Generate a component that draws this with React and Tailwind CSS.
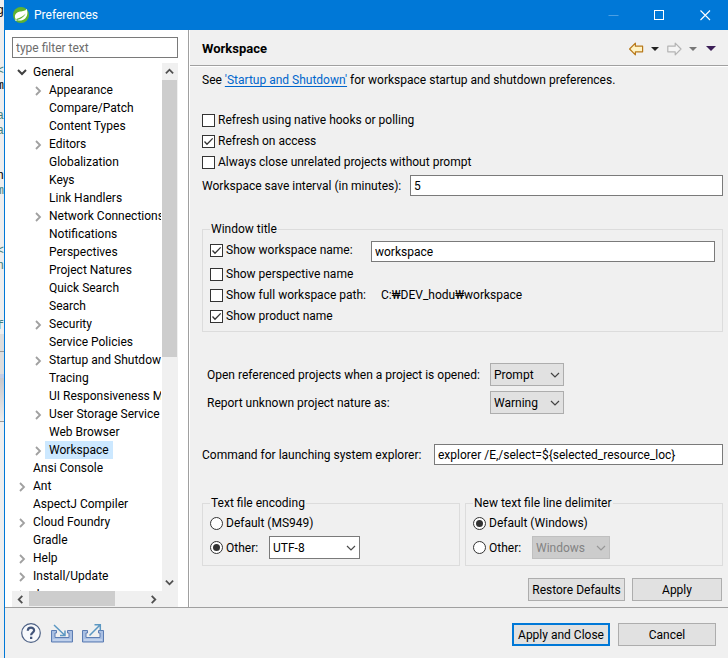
import { useState } from "react";

const TREE = [
	{ label: "General", level: 0, state: "open" },
	{ label: "Appearance", level: 1, state: "closed" },
	{ label: "Compare/Patch", level: 1 },
	{ label: "Content Types", level: 1 },
	{ label: "Editors", level: 1, state: "closed" },
	{ label: "Globalization", level: 1 },
	{ label: "Keys", level: 1 },
	{ label: "Link Handlers", level: 1 },
	{ label: "Network Connections", level: 1, state: "closed" },
	{ label: "Notifications", level: 1 },
	{ label: "Perspectives", level: 1 },
	{ label: "Project Natures", level: 1 },
	{ label: "Quick Search", level: 1 },
	{ label: "Search", level: 1 },
	{ label: "Security", level: 1, state: "closed" },
	{ label: "Service Policies", level: 1 },
	{ label: "Startup and Shutdown", level: 1, state: "closed" },
	{ label: "Tracing", level: 1 },
	{ label: "UI Responsiveness Monitoring", level: 1 },
	{ label: "User Storage Service", level: 1, state: "closed" },
	{ label: "Web Browser", level: 1 },
	{ label: "Workspace", level: 1, state: "closed" },
	{ label: "Ansi Console", level: 0 },
	{ label: "Ant", level: 0, state: "closed" },
	{ label: "AspectJ Compiler", level: 0 },
	{ label: "Cloud Foundry", level: 0, state: "closed" },
	{ label: "Gradle", level: 0 },
	{ label: "Help", level: 0, state: "closed" },
	{ label: "Install/Update", level: 0, state: "closed" },
	{ label: "Java", level: 0, state: "closed" },
];

// Editor lines that show past the left edge of the dialog
const EDITOR_LINES = [
	"g", "", "", "", "<", "m", "", "a", "a", "", "", "n", "m", "", "", "", "<", "n", "", "", "", "f",
];
const DARK_LINES = [0, 5, 11];

const CHEVRONS = {
	up: "M1 7 L5 3 L9 7",
	down: "M1 3 L5 7 L9 3",
	left: "M7 1 L3 5 L7 9",
	right: "M3 1 L7 5 L3 9",
};

const Chevron = ({ dir, className, width = 2 }) => (
	<svg viewBox="0 0 10 10" className={className} fill="none" stroke="currentColor" strokeWidth={width}>
		<path d={CHEVRONS[dir]} />
	</svg>
);

const CheckBox = ({ label, defaultChecked }) => (
	<label className="flex items-center gap-[3px] whitespace-nowrap">
		<span className="grid size-[13px] shrink-0">
			<input
				type="checkbox"
				defaultChecked={defaultChecked}
				className="peer col-start-1 row-start-1 size-[13px] appearance-none border border-[#333] bg-white"
			/>
			<svg
				viewBox="0 0 13 13"
				className="pointer-events-none invisible col-start-1 row-start-1 size-[13px] peer-checked:visible"
				fill="none"
				stroke="#333"
				strokeWidth="1.3">
				<path d="M2.5 6.5 L5 9.2 L10.7 3.4" />
			</svg>
		</span>
		{label}
	</label>
);

const Radio = ({ label, name, defaultChecked }) => (
	<label className="flex items-center gap-[3px] whitespace-nowrap">
		<span className="grid size-[13px] shrink-0 place-items-center">
			<input
				type="radio"
				name={name}
				defaultChecked={defaultChecked}
				className="peer col-start-1 row-start-1 size-[13px] appearance-none rounded-full border border-[#333] bg-white"
			/>
			<span className="pointer-events-none invisible col-start-1 row-start-1 size-[7px] rounded-full bg-[#333] peer-checked:visible" />
		</span>
		{label}
	</label>
);

const Select = ({ id, label, options, disabled, className }) => (
	<span className={`grid h-[23px] shrink-0 items-center ${className}`}>
		<select
			id={id}
			aria-label={label}
			disabled={disabled}
			className="col-start-1 row-start-1 h-full w-full appearance-none border border-inherit pl-[3px]">
			{options.map((option) => (
				<option key={option}>{option}</option>
			))}
		</select>
		<Chevron
			dir="down"
			width={1.2}
			className="pointer-events-none col-start-1 row-start-1 mr-1 size-[10px] justify-self-end opacity-70"
		/>
	</span>
);

const INPUT = "h-[21px] min-w-0 border border-[#7a7a7a] bg-white px-[3px]";
const BUTTON = "h-[23px] whitespace-nowrap border border-[#adadad] bg-[#e1e1e1]";

const TitleBar = () => (
	<header className="flex h-[30px] shrink-0 items-center bg-[#0078d7] text-white">
		<svg viewBox="0 0 16 16" className="ml-2 size-4">
			<circle cx="8" cy="8" r="8" fill="#5fb331" />
			<path d="M13.6 1.8 C12.6 4.2 10 4.1 7 4.6 C3.6 5.2 1.7 7.3 1.9 9.8 C2 11.5 3 12.7 4.4 13.3 C8.9 14.5 12.7 12 14 8.4 C14.7 6.2 14.5 3.8 13.6 1.8 Z" fill="#fff" />
			<path d="M2.3 13.5 C7 12.8 10.6 10.8 12.7 6.6 C10.5 9.3 7.4 10.9 3.2 12" fill="#5fb331" />
			<circle cx="3" cy="13.1" r="0.8" fill="#fff" />
		</svg>
		<h1 className="ml-[5px] flex-1">Preferences</h1>
		<button aria-label="Minimize" className="flex w-[46px] justify-center">
			<svg viewBox="0 0 11 11" className="size-[11px]" stroke="#4b9fe3">
				<path d="M0.5 5.5 H10.5" />
			</svg>
		</button>
		<button aria-label="Maximize" className="flex w-[46px] justify-center">
			<svg viewBox="0 0 11 11" className="size-[11px]" fill="none" stroke="#fff">
				<rect x="0.5" y="0.5" width="9" height="9" />
			</svg>
		</button>
		<button aria-label="Close" className="flex w-[46px] justify-center">
			<svg viewBox="0 0 11 11" className="size-[11px]" stroke="#fff" strokeWidth="1.1">
				<path d="M0.5 0.5 L10 10 M10 0.5 L0.5 10" />
			</svg>
		</button>
	</header>
);

const TreeItem = ({ item, selected, onSelect }) => (
	<li className={`flex h-[18px] items-center ${item.level ? "pl-[21px]" : "pl-[5px]"}`}>
		<span className="flex w-3 shrink-0">
			{item.state === "open" && <Chevron dir="down" className="size-[10px] text-[#404040]" />}
			{item.state === "closed" && <Chevron dir="right" width={1.8} className="mt-[2px] size-[10px] text-[#a0a0a0]" />}
		</span>
		<button
			onClick={() => onSelect(item.label)}
			className={`h-[18px] whitespace-nowrap px-1 ${selected ? "bg-[#cce8ff]" : ""}`}>
			{item.label}
		</button>
	</li>
);

const Sidebar = () => {
	const [selected, setSelected] = useState("Workspace");

	return (
		<aside className="flex w-[185px] shrink-0 flex-col border-r border-white bg-white">
			<div className="flex min-h-0 flex-1 flex-col border-r border-[#a0a0a0] pl-[7px] pr-[10px] pt-[7px]">
				<input
					type="text"
					aria-label="Filter"
					placeholder="type filter text"
					className={`${INPUT} shrink-0 placeholder:text-[#6d6d6d]`}
				/>
				<div className="mt-[5px] flex min-h-0 flex-1 gap-px">
					<ul className="min-w-0 flex-1 overflow-hidden">
						{TREE.map((item) => (
							<TreeItem
								key={item.label}
								item={item}
								selected={item.label === selected}
								onSelect={setSelected}
							/>
						))}
					</ul>
					<div className="flex w-4 shrink-0 flex-col bg-[#f0f0f0]">
						<button aria-label="Scroll up" className="flex h-[17px] items-center justify-center pr-px text-[#505050]">
							<Chevron dir="up" className="size-[9px]" />
						</button>
						<div className="flex-1">
							<div className="mr-px h-[56%] bg-[#cdcdcd]" />
						</div>
						<button aria-label="Scroll down" className="flex h-[17px] items-center justify-center pr-px text-[#505050]">
							<Chevron dir="down" className="size-[9px]" />
						</button>
					</div>
				</div>
				<div className="flex h-4 shrink-0 bg-[#f0f0f0] pr-4">
					<button aria-label="Scroll left" className="flex w-[17px] items-center justify-center text-[#505050]">
						<Chevron dir="left" className="size-[9px]" />
					</button>
					<div className="flex-1">
						<div className="h-[15px] w-[74%] bg-[#cdcdcd]" />
					</div>
					<button aria-label="Scroll right" className="flex w-[17px] items-center justify-center text-[#505050]">
						<Chevron dir="right" className="size-[9px]" />
					</button>
				</div>
			</div>
		</aside>
	);
};

const Triangle = ({ fill }) => (
	<svg viewBox="0 0 8 4" className="h-1 w-2">
		<path d="M0 0 H8 L4 4 Z" fill={fill} />
	</svg>
);

const PageHeader = () => (
	<div className="flex h-9 shrink-0 items-center border-b border-[#a0a0a0] px-3 pt-[2px]">
		<h2 className="flex-1 text-[13px] font-bold">Workspace</h2>
		<div className="flex items-center">
			<button aria-label="Back">
				<svg viewBox="0 0 16 14" className="h-[14px] w-4" fill="#fff3c4" stroke="#b8791b" strokeWidth="1.2" strokeLinejoin="round">
					<path d="M0.6 7 L6.4 1.2 V4.2 H13.6 V9.8 H6.4 V12.8 Z" />
				</svg>
			</button>
			<button aria-label="Back history" className="ml-[6px]">
				<Triangle fill="#222" />
			</button>
			<button aria-label="Forward" className="ml-2">
				<svg viewBox="0 0 16 14" className="h-[14px] w-4" fill="#f5f5f5" stroke="#b4b4b4" strokeWidth="1.2" strokeLinejoin="round">
					<path d="M14 7 L8.2 1.2 V4.2 H0.8 V9.8 H8.2 V12.8 Z" />
				</svg>
			</button>
			<button aria-label="Forward history" className="ml-[6px]">
				<Triangle fill="#777" />
			</button>
			<button aria-label="View menu" className="ml-[9px]">
				<svg viewBox="0 0 10 5" className="h-[5px] w-[10px]">
					<path d="M0 0 H10 L5 5 Z" fill="#3c1f57" />
				</svg>
			</button>
		</div>
	</div>
);

const Group = ({ title, className, children }) => (
	<fieldset className={`min-w-0 border border-[#dcdcdc] px-[7px] ${className}`}>
		<legend className="h-4 px-px leading-4">{title}</legend>
		{children}
	</fieldset>
);

const WorkspacePage = () => (
	<div className="flex flex-1 flex-col border-t border-white pl-3 pr-[5px]">
		<p className="mt-[5px] leading-4">
			See{" "}
			<a href="#startup" className="text-[#0066cc] underline underline-offset-2">
				'Startup and Shutdown'
			</a>{" "}
			for workspace startup and shutdown preferences.
		</p>

		<div className="mt-6 flex flex-col gap-[5px] leading-4">
			<CheckBox label="Refresh using native hooks or polling" />
			<CheckBox label="Refresh on access" defaultChecked />
			<CheckBox label="Always close unrelated projects without prompt" />
		</div>
		<div className="mt-[5px] flex items-center gap-2">
			<label htmlFor="interval" className="w-[200px] whitespace-nowrap">
				Workspace save interval (in minutes):
			</label>
			<input id="interval" type="text" defaultValue="5" className={`${INPUT} flex-1`} />
		</div>

		<Group title="Window title" className="mt-[25px] pb-[7px]">
			<div className="mt-1 flex gap-2">
				<div className="w-[153px] leading-[19px]">
					<CheckBox label="Show workspace name:" defaultChecked />
				</div>
				<input type="text" aria-label="Workspace name" defaultValue="workspace" className={`${INPUT} flex-1`} />
			</div>
			<div className="mt-1 flex flex-col gap-[5px] leading-4">
				<CheckBox label="Show perspective name" />
				<div className="flex">
					<div className="w-[171px]">
						<CheckBox label="Show full workspace path:" />
					</div>
					<span>C:₩DEV_hodu₩workspace</span>
				</div>
				<CheckBox label="Show product name" defaultChecked />
			</div>
		</Group>

		<div className="mt-[31px] grid grid-cols-[278px_auto] items-center justify-start gap-x-[5px] gap-y-[5px] pl-[5px]">
			<label htmlFor="referenced" className="whitespace-nowrap">
				Open referenced projects when a project is opened:
			</label>
			<Select id="referenced" options={["Prompt", "Always", "Never"]} className="w-[74px] border-[#adadad] bg-[#e1e1e1]" />
			<label htmlFor="nature" className="whitespace-nowrap">
				Report unknown project nature as:
			</label>
			<Select id="nature" options={["Warning", "Error", "Ignore"]} className="w-[74px] border-[#adadad] bg-[#e1e1e1]" />
		</div>

		<div className="mt-[30px] flex items-center gap-2">
			<label htmlFor="command" className="w-[224px] whitespace-nowrap">
				Command for launching system explorer:
			</label>
			<input
				id="command"
				type="text"
				defaultValue="explorer /E,/select=${selected_resource_loc}"
				className={`${INPUT} flex-1`}
			/>
		</div>

		<div className="mt-[30px] grid grid-cols-2 gap-[5px]">
			<Group title="Text file encoding" className="pb-[6px]">
				<div className="mt-1 leading-4">
					<Radio name="encoding" label="Default (MS949)" />
				</div>
				<div className="mt-[5px] flex items-center">
					<div className="w-[59px]">
						<Radio name="encoding" label="Other:" defaultChecked />
					</div>
					<Select label="Encoding" options={["UTF-8", "UTF-16", "ISO-8859-1"]} className="w-[91px] border-[#7a7a7a] bg-white" />
				</div>
			</Group>
			<Group title="New text file line delimiter" className="pb-[6px]">
				<div className="mt-1 leading-4">
					<Radio name="delimiter" label="Default (Windows)" defaultChecked />
				</div>
				<div className="mt-[5px] flex items-center">
					<div className="w-[59px]">
						<Radio name="delimiter" label="Other:" />
					</div>
					<Select
						label="Line delimiter"
						options={["Windows", "Unix"]}
						disabled
						className="w-[78px] border-[#bfbfbf] bg-[#cccccc] text-[#838383]"
					/>
				</div>
			</Group>
		</div>

		<div className="mt-3 flex justify-end gap-[7px] pr-px">
			<button className={`${BUTTON} w-[97px]`}>Restore Defaults</button>
			<button className={`${BUTTON} w-[90px]`}>Apply</button>
		</div>
	</div>
);

const Tray = ({ children }) => (
	<svg viewBox="0 0 22 20" className="h-5 w-[22px]" fill="none">
		<path
			d="M0.5 7.5 H5.5 V10 H4 V14.5 H18 V10 H16.5 V7.5 H21.5 V19 H0.5 Z"
			fill="#a9bfe2"
			stroke="#5c7db3"
		/>
		<path d="M2 17 H20" stroke="#d7e3f5" />
		{children}
	</svg>
);

const Footer = () => (
	<footer className="flex h-[51px] shrink-0 items-center border-t border-[#a0a0a0] pl-4 pr-3">
		<div className="flex flex-1 items-center gap-[9px]">
			<button aria-label="Help" className="pr-px">
				<svg viewBox="0 0 20 20" className="size-5" fill="none">
					<circle cx="10" cy="10" r="9.3" fill="#f7f9fc" stroke="#4d6185" strokeWidth="1.2" />
					<path d="M6.8 7.8 C6.8 3.6 13.2 3.8 13.1 7.5 C13 9.7 10.1 9.6 10.1 12.2" stroke="#42557b" strokeWidth="2.2" />
					<rect x="9" y="13.7" width="2.3" height="2.3" fill="#42557b" />
				</svg>
			</button>
			<button aria-label="Import preferences">
				<Tray>
					<path d="M3 2 L13.5 12 M14 7.5 V12.5 H9" stroke="#5b97c2" strokeWidth="1.5" />
				</Tray>
			</button>
			<button aria-label="Export preferences">
				<Tray>
					<path d="M7.5 12.5 L18 2 M12.5 1.7 H18.3 V7.5" stroke="#5b97c2" strokeWidth="1.5" />
				</Tray>
			</button>
		</div>
		<div className="flex gap-2 pt-[3px]">
			<button className="h-[23px] w-[98px] whitespace-nowrap border-2 border-[#0078d7] bg-[#e1e1e1]">
				Apply and Close
			</button>
			<button className={`${BUTTON} w-[98px]`}>Cancel</button>
		</div>
	</footer>
);

export default function App() {
	return (
		<div className="flex h-screen overflow-hidden bg-[#f0f0f0] font-[Roboto,'Noto_Sans_CJK_KR',sans-serif] text-[12px] leading-4 text-black">
			<div className="flex w-1 shrink-0 flex-col overflow-hidden bg-[#eeeeee] pt-1 font-['Liberation_Mono',monospace] leading-[15px]">
				{EDITOR_LINES.map((line, i) => (
					<span
						key={i}
						className={`flex h-[15px] shrink-0 justify-end ${DARK_LINES.includes(i) ? "text-black" : "text-[#3f7f7f]"}`}>
						{line}
					</span>
				))}
				<div className="h-[18px] shrink-0 border-b border-[#999] bg-[#dddddd]" />
				<div className="h-[22px] shrink-0 bg-[#dddddd]" />
				<div className="h-1 shrink-0 bg-[#c4cde4]" />
				<div className="h-[44px] shrink-0 border-b border-[#999] bg-linear-to-b from-[#c8c8cc] to-[#ececec]" />
			</div>
			<div className="flex min-w-0 flex-1 flex-col border-l border-[#0078d7]">
				<TitleBar />
				<div className="flex min-h-0 flex-1">
					<Sidebar />
					<main className="flex min-w-0 flex-1 flex-col">
						<PageHeader />
						<WorkspacePage />
					</main>
				</div>
				<Footer />
			</div>
		</div>
	);
}
